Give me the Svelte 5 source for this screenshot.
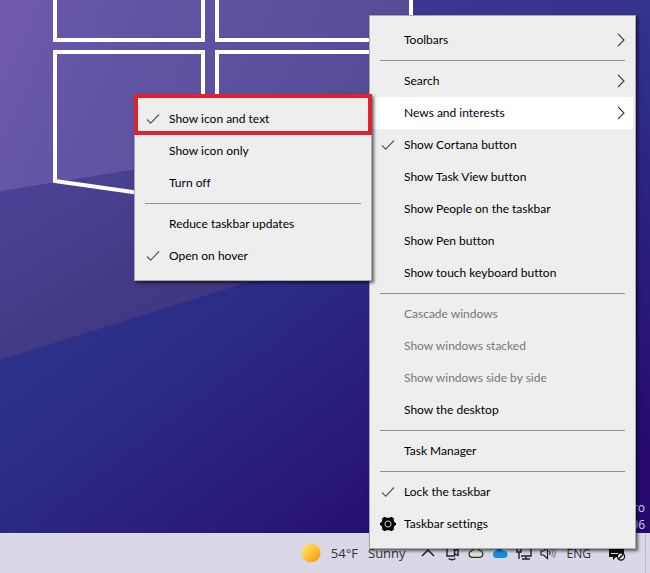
<script lang="ts">
  interface MenuItem {
    label?: string;
    separator?: boolean;
    checked?: boolean;
    disabled?: boolean;
    gear?: boolean;
    arrow?: boolean;
    submenu?: MenuItem[];
  }

  const newsItems: MenuItem[] = [
    { label: "Show icon and text", checked: true },
    { label: "Show icon only" },
    { label: "Turn off" },
    { separator: true },
    { label: "Reduce taskbar updates" },
    { label: "Open on hover", checked: true },
  ];

  const menuItems: MenuItem[] = [
    { label: "Toolbars", arrow: true },
    { separator: true },
    { label: "Search", arrow: true },
    { label: "News and interests", arrow: true, submenu: newsItems },
    { label: "Show Cortana button", checked: true },
    { label: "Show Task View button" },
    { label: "Show People on the taskbar" },
    { label: "Show Pen button" },
    { label: "Show touch keyboard button" },
    { separator: true },
    { label: "Cascade windows", disabled: true },
    { label: "Show windows stacked", disabled: true },
    { label: "Show windows side by side", disabled: true },
    { label: "Show the desktop" },
    { separator: true },
    { label: "Task Manager" },
    { separator: true },
    { label: "Lock the taskbar", checked: true },
    { label: "Taskbar settings", gear: true },
  ];

  const highlighted = "Show icon and text";
</script>

{#snippet menu(items: MenuItem[])}
  {#each items as item}
    {#if item.separator}
      <li class="separator" role="separator"></li>
    {:else}
      <li
        class="item"
        class:open={item.submenu}
        class:highlighted={item.label === highlighted}
        role="none"
      >
        <button role="menuitem" disabled={item.disabled}>
          <span class="mark">
            {#if item.checked}
              <svg width="14" height="12" viewBox="0 0 14 12">
                <path d="M1 6.5 L4.7 10.2 L13 1.5" fill="none" stroke="#555" stroke-width="1.1" />
              </svg>
            {:else if item.gear}
              <svg width="16" height="16" viewBox="0 0 16 16">
                <path d="M4.2 .8 L6.6 1.7 H9.4 L11.8 .8 L14 2.8 L13.8 5 L14.7 6.3 L16 7 V9 L14.7 9.7 L13.8 11 L14 13.2 L11.8 15.2 L9.4 14.3 H6.6 L4.2 15.2 L2 13.2 L2.2 11 L1.3 9.7 L0 9 V7 L1.3 6.3 L2.2 5 L2 2.8 Z" fill="#080808" />
                <circle cx="8" cy="8" r="3.1" fill="none" stroke="#ccc" stroke-width="1" />
              </svg>
            {/if}
          </span>
          <span class="label">{item.label}</span>
          {#if item.arrow}
            <svg width="8" height="14" viewBox="0 0 8 14">
              <path d="M1 .8 L7 7 L1 13.2" fill="none" stroke="#333" stroke-width="1.1" />
            </svg>
          {/if}
        </button>
        {#if item.submenu}
          <ul class="menu submenu" role="menu">
            {@render menu(item.submenu)}
          </ul>
        {/if}
      </li>
    {/if}
  {/each}
{/snippet}

<div class="screen">
  <main class="desktop">
    <svg class="wallpaper" viewBox="0 0 650 533" preserveAspectRatio="none">
      <defs>
        <linearGradient id="base" gradientUnits="userSpaceOnUse" x1="130" y1="230" x2="380" y2="560">
          <stop offset="0" stop-color="#2e338c" />
          <stop offset="0.45" stop-color="#2b2781" />
          <stop offset="1" stop-color="#260b70" />
        </linearGradient>
        <linearGradient id="side" gradientUnits="userSpaceOnUse" x1="413" y1="0" x2="560" y2="480">
          <stop offset="0" stop-color="#3a3893" />
          <stop offset="0.35" stop-color="#2d2b85" />
          <stop offset="1" stop-color="#260a70" />
        </linearGradient>
        <linearGradient id="beam" gradientUnits="userSpaceOnUse" x1="0" y1="190" x2="90" y2="340">
          <stop offset="0" stop-color="#4c4296" />
          <stop offset="1" stop-color="#403882" />
        </linearGradient>
        <linearGradient id="glow" gradientUnits="userSpaceOnUse" x1="0" y1="0" x2="400" y2="190">
          <stop offset="0" stop-color="#7059ae" />
          <stop offset="0.2" stop-color="#6556a7" />
          <stop offset="0.6" stop-color="#5b509d" />
          <stop offset="1" stop-color="#524893" />
        </linearGradient>
      </defs>
      <rect width="650" height="533" fill="url(#base)" />
      <rect x="413" width="237" height="533" fill="url(#side)" />
      <path d="M0 180 L413 120 L413 230 L0 360 Z" fill="url(#beam)" />
      <path d="M0 0 H413 V125 L0 191 Z" fill="url(#glow)" />
      <g fill="none" stroke="#fff" stroke-width="4">
        <path d="M55 0 V40 H203 V0 M217 0 V40 H411 V0" />
        <path d="M55 181 V52 H203 V202 Z M217 204 V52 H411 V230 Z" />
      </g>
    </svg>
    <p class="edition">Pro<br />06</p>
  </main>

  <footer class="taskbar">
    <button class="weather">
      <svg width="20" height="20" viewBox="0 0 20 20">
        <defs>
          <linearGradient id="sun" x1="0.1" y1="0.1" x2="0.9" y2="0.9">
            <stop offset="0" stop-color="#fde370" />
            <stop offset="0.5" stop-color="#fcc337" />
            <stop offset="1" stop-color="#f59a16" />
          </linearGradient>
        </defs>
        <circle cx="10" cy="10" r="9.5" fill="url(#sun)" />
      </svg>
      <span>54°F</span>
      <span>Sunny</span>
    </button>
    <div class="tray">
      <button aria-label="Show hidden icons">
        <svg width="16" height="16" viewBox="0 0 16 16">
          <path d="M2 11 L8 5 L14 11" fill="none" stroke="#222" stroke-width="1.5" />
        </svg>
      </button>
      <button aria-label="Meet now">
        <svg width="16" height="16" viewBox="0 0 16 16" fill="none" stroke="#222" stroke-width="1.4">
          <path d="M3 2 H10.5 V11 H3 Z M10.5 6 L14 3.5 V10.5 L10.5 8.5 M4.5 13.5 Q8 16 11.5 13.5" />
        </svg>
      </button>
      <button aria-label="OneDrive personal">
        <svg width="16" height="16" viewBox="0 0 16 16">
          <path d="M4 12.3 A3.2 3.2 0 0 1 3.5 6 A4.5 4.5 0 0 1 11.5 5.5 A3.5 3.5 0 0 1 12.5 12.3 Z" fill="#ddddd6" stroke="#333" stroke-width="1.2" />
        </svg>
      </button>
      <button aria-label="OneDrive">
        <svg width="16" height="16" viewBox="0 0 16 16">
          <path d="M4 13 A3.6 3.6 0 0 1 3.5 6 A4.5 4.5 0 0 1 11.5 6 A3.5 3.5 0 0 1 12.5 13 Z" fill="#168fe0" />
        </svg>
      </button>
      <button aria-label="Network">
        <svg width="16" height="16" viewBox="0 0 16 16" fill="none" stroke="#222" stroke-width="1.4">
          <path d="M5 3 H15 V11 H5 M10 11 V14 M6 14 H14 M1 3 H5 V7 H1 Z M3 7 V14" />
        </svg>
      </button>
      <button aria-label="Volume">
        <svg width="16" height="16" viewBox="0 0 16 16" fill="none" stroke="#222" stroke-width="1.2">
          <path d="M1 6 H3.5 L7.5 2.5 V13.5 L3.5 10 H1 Z M9.5 6 Q11 8 9.5 10" />
          <path d="M11.5 4.5 Q14 8 11.5 11.5 M13.5 3 Q17 8 13.5 13" stroke="#888" />
        </svg>
      </button>
      <button class="language">ENG</button>
      <button aria-label="Notifications">
        <svg width="18" height="16" viewBox="0 0 18 16">
          <path d="M1 1 H16 V12 H8 L5 15 V12 H1 Z" fill="#111" />
          <path d="M3 8.5 H11" stroke="#ddd" stroke-width="1" />
          <circle cx="13" cy="11.5" r="3.6" fill="#ddd" stroke="#111" stroke-width="1.2" />
          <path d="M10.5 14 L15.5 9" stroke="#111" stroke-width="1.2" />
        </svg>
      </button>
    </div>
    <button class="show-desktop" aria-label="Show desktop"></button>
  </footer>

  <ul class="menu main-menu" role="menu">
    {@render menu(menuItems)}
  </ul>
</div>

<style>
  :global(body) {
    margin: 0;
  }

  .screen {
    position: relative;
    display: flex;
    flex-direction: column;
    min-height: 100vh;
    overflow: hidden;
    font-family: "Open Sans", "Noto Sans", sans-serif;
    font-size: 12px;
  }

  button {
    margin: 0;
    padding: 0;
    border: 0;
    background: none;
    color: inherit;
    font: inherit;
  }

  svg {
    display: block;
    flex: none;
  }

  .desktop {
    flex: 1;
    display: flex;
    align-items: flex-end;
    justify-content: flex-end;
    position: relative;
    background: #2b2380;
  }

  .wallpaper {
    position: absolute;
    inset: 0;
    width: 100%;
    height: 100%;
  }

  .edition {
    position: relative;
    margin: 0;
    padding-right: 5px;
    color: #ddd8ee;
    line-height: 17px;
    text-align: right;
  }

  .taskbar {
    display: flex;
    align-items: center;
    justify-content: flex-end;
    height: 40px;
    background: #dad7e6;
    color: #333;
  }

  .weather {
    display: flex;
    align-items: center;
    gap: 10px;
    margin-right: 14px;
    font-size: 13px;
  }

  .tray {
    display: flex;
    align-items: center;
    gap: 8px;
    padding-right: 19px;
  }

  .language {
    padding: 0 9px 0 3px;
  }

  .show-desktop {
    align-self: stretch;
    width: 5px;
    border-left: 1px solid #bcb9ca;
  }

  .menu {
    position: absolute;
    box-sizing: border-box;
    margin: 0;
    padding: 8px 2px;
    border: 1px solid #a8a8ac;
    background: #eee;
    box-shadow: 2px 2px 3px rgba(0, 0, 0, 0.6);
    list-style: none;
    color: #000;
    font-family: Lato, "Open Sans", sans-serif;
    font-variant-ligatures: none;
  }

  .main-menu {
    right: 14px;
    bottom: 24px;
    width: 267px;
  }

  .submenu {
    top: -3px;
    right: 100%;
    width: 238px;
  }

  .item {
    position: relative;
  }

  .item > button {
    display: flex;
    align-items: center;
    width: 100%;
    height: 32px;
    padding-right: 8px;
    font-variant-ligatures: inherit;
    text-align: left;
  }

  .item > button:disabled {
    color: #777;
  }

  .open > button {
    background: #fff;
  }

  .highlighted::after {
    content: "";
    position: absolute;
    inset: -9px -3px 0;
    border: 4px solid #dc2430;
    pointer-events: none;
  }

  .mark {
    display: flex;
    justify-content: center;
    width: 32px;
  }

  .label {
    flex: 1;
    padding-bottom: 2px;
  }

  .separator {
    height: 1px;
    margin: 4px 8px;
    background: #919191;
  }
</style>
